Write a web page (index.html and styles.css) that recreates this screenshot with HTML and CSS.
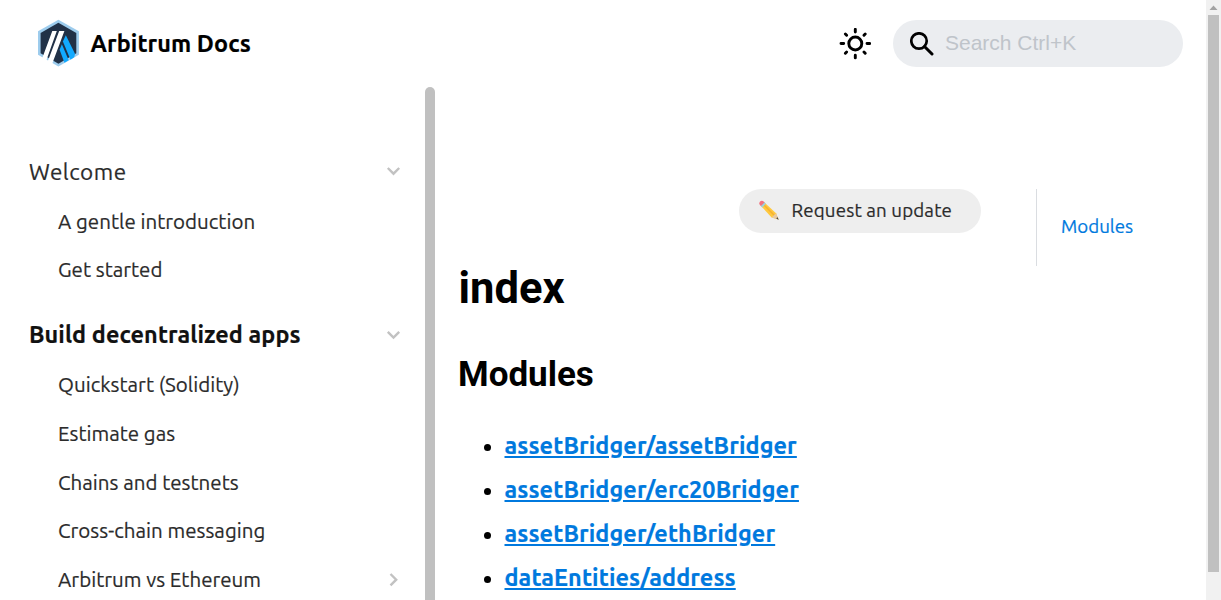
FILE: index.html
```html
<!DOCTYPE html>
<html lang="en">
<head>
<meta charset="utf-8">
<title>index | Arbitrum Docs</title>
<link rel="stylesheet" href="styles.css">
</head>
<body>
<div class="page">
  <header class="navbar">
    <a class="brand">
      <svg class="logo" viewBox="0 0 42 48" width="42" height="48">
        <path d="M21.400 0.800 41.900 12.300v23.500L21.400 47.600 1 35.800V12.300z" fill="#9dcced"/>
        <path d="M21.400 3.700 39.300 14v20.300L21.400 44.700 3.600 34.300V14z" fill="#213147"/>
        <path d="M28.800 16.200 38 34.800 37.200 38.300 33.500 40.700 25.900 22.500z" fill="#12aaff"/>
        <path d="M24.900 25.300 31.700 41.300 27.500 43.800 22.600 30.700z" fill="#12aaff"/>
        <path d="M15.300 12h4.500L9 42.200 5 39.800zM22.200 12h5.200L15 45.200 10.600 42.700z" fill="#fff"/>
      </svg>
      <span class="brand-name">Arbitrum Docs</span>
    </a>
    <div class="tools">
      <svg class="sun" viewBox="0 0 32 32" width="32" height="32" fill="none" stroke="#000" stroke-width="2.900" stroke-linecap="round">
        <circle cx="16.300" cy="15.500" r="6.500"/>
        <path d="M16.300 1.300v2.700M16.300 27.200v2.700M2 15.500h2.700M28 15.500h2.700M6.400 6l1.200 1.200M25 24l1.200 1.200M6.400 25.200l1.200-1.200M25 7.200l1.200-1.200"/>
      </svg>
      <div class="search">
        <svg viewBox="0 0 24 24" width="24" height="24" fill="none" stroke="#000">
          <circle cx="9" cy="9" r="7.700" stroke-width="2.700"/>
          <path d="M14.500 14.500 22 22" stroke-width="3" stroke-linecap="round"/>
        </svg>
        <span class="hint">Search Ctrl+K</span>
      </div>
    </div>
  </header>
  <div class="body">
    <nav class="sidebar">
      <div class="menu">
        <div class="category"><span>Welcome</span><svg class="chev" viewBox="0 0 14 14" width="14" height="14"><path d="M1.300 4 7 9.700 12.700 4"/></svg></div>
        <div class="item"><span>A gentle introduction</span></div>
        <div class="item"><span>Get started</span></div>
        <div class="category active"><span>Build decentralized apps</span><svg class="chev" viewBox="0 0 14 14" width="14" height="14"><path d="M1.300 4.800 7 10.500 12.700 4.800"/></svg></div>
        <div class="item"><span>Quickstart (Solidity)</span></div>
        <div class="item"><span>Estimate gas</span></div>
        <div class="item"><span>Chains and testnets</span></div>
        <div class="item"><span>Cross-chain messaging</span></div>
        <div class="item"><span>Arbitrum vs Ethereum</span><svg class="chev" viewBox="0 0 14 14" width="14" height="14"><path d="M4 2 9.700 7.700 4 13.400"/></svg></div>
      </div>
      <div class="side-thumb"></div>
    </nav>
    <main class="content">
      <article class="doc">
        <a class="update">
          <svg viewBox="0 0 20 20" width="20" height="20">
            <path d="M5.200 2.200 17 13.200l2.600 6.300-7-2.100L1.700 5.700z" fill="#ffc83d"/>
            <path d="M4.500 4.500 15.700 15.700" stroke="#f5b030" stroke-width="1.500"/>
            <path d="M12.600 17.400 17 13.200l2.600 6.300z" fill="#e8c9a0"/>
            <path d="m17.400 18.700.9-1.600 1.500 2.600z" fill="#444"/>
            <path d="M6.900 3.700 3.200 7.400 1.500 5.700l3.800-3.800z" fill="#9ad0e0"/>
            <path d="M5.600 2.300 1.900 6Q-.5 4 .7 2.100 2.700-.8 5.600 2.300z" fill="#f2717f"/>
          </svg>
          <span>Request an update</span>
        </a>
        <h1>index</h1>
        <h2>Modules</h2>
        <ul>
          <li><a>assetBridger/assetBridger</a></li>
          <li><a>assetBridger/erc20Bridger</a></li>
          <li><a>assetBridger/ethBridger</a></li>
          <li><a>dataEntities/address</a></li>
        </ul>
      </article>
      <aside class="toc"><a>Modules</a></aside>
    </main>
  </div>
</div>
<div class="scrollbar">
  <svg viewBox="0 0 15 15" width="15" height="15"><path d="M3.500 10h8L7.500 5.500z" fill="#a3a3a3"/></svg>
  <div class="thumb"></div>
</div>
</body>
</html>
```
FILE: styles.css
```css
* { box-sizing: border-box; }
body {
  margin: 0;
  height: 600px;
  overflow: hidden;
  display: grid;
  grid-template-columns: 1fr 15px;
  background: #fff;
  color: #000;
  font-family: Ubuntu, "Noto Sans", sans-serif;
}
svg { display: block; flex: none; }
.page { display: flex; flex-direction: column; height: 600px; overflow: hidden; }
.navbar {
  flex: none;
  height: 87px;
  padding: 0 23px 0 37px;
  display: flex;
  align-items: center;
  justify-content: space-between;
}
.brand { display: flex; align-items: center; gap: 11.500px; }
.logo { margin-top: -1px; }
.brand-name {
  font-size: 23.400px;
  font-weight: 700;
  letter-spacing: 0.080px;
  white-space: nowrap;
  padding-bottom: 2px;
  -webkit-text-stroke: 0.200px;
}
.tools { display: flex; align-items: center; gap: 22px; }
.search {
  width: 290px;
  height: 47px;
  border-radius: 24px;
  background: #ebedf0;
  padding-left: 17px;
  display: flex;
  align-items: center;
  gap: 11px;
}
.hint { font: 21px "Liberation Sans", sans-serif; color: #bfc4ca; padding-bottom: 2px; }
.body { flex: 1; min-height: 0; display: flex; }
.sidebar { width: 435px; flex: none; display: flex; overflow: hidden; }
.menu { width: 425px; flex: none; padding: 60px 25px 0 29px; }
.side-thumb { width: 10px; height: 600px; flex: none; background: #c0c0c0; border-radius: 5px; }
.category, .item {
  display: flex;
  align-items: center;
  justify-content: space-between;
  white-space: nowrap;
  color: #2b2b2b;
  -webkit-text-stroke: 0.200px;
}
.category { height: 48px; font-size: 22.500px; letter-spacing: 0.480px; margin-bottom: 2px; }
.category.active {
  margin-top: 16.500px;
  margin-bottom: 1.500px;
  padding-bottom: 1px;
  font-size: 23.400px;
  letter-spacing: 0.080px;
  font-weight: 700;
  color: #111;
}
.item { height: 48.700px; padding-left: 29px; font-size: 20.500px; letter-spacing: 0.020px; }
.item:nth-child(3) { padding-bottom: 2px; }
.chev { fill: none; stroke: #c2c2c2; stroke-width: 2.400; overflow: visible; }
.chev path { transform: translateX(0.500px); }
.content { flex: 1; display: flex; }
.doc { width: 546px; padding: 102px 0 0 23px; display: flex; flex-direction: column; }
.update {
  align-self: flex-end;
  width: 242px;
  height: 44px;
  border-radius: 22px;
  background: #eee;
  color: #2b2b2b;
  font-size: 18.720px;
  letter-spacing: 0.150px;
  padding: 0 0 2px 20px;
  display: flex;
  align-items: center;
  gap: 12.500px;
  white-space: nowrap;
  -webkit-text-stroke: 0.200px;
}
h1, h2 { font-family: Roboto, sans-serif; font-weight: 700; margin: 0; }
h1 { font-size: 43.500px; line-height: 54px; margin-top: 29px; padding-left: 0.500px; }
h2 { font-size: 35px; line-height: 44px; margin-top: 37px; }
ul { margin: 26px 0 0; padding-left: 46.500px; font-size: 23.400px; }
li { height: 44px; line-height: 44px; white-space: nowrap; }
li a {
  color: #0079de;
  font-weight: 700;
  letter-spacing: 0.110px;
  text-decoration: underline;
  -webkit-text-stroke: 0.200px;
}
.toc {
  margin: 102px 0 0 55px;
  height: 77px;
  border-left: 1px solid #dadde1;
  padding: 0 0 3px 24px;
  display: flex;
  align-items: center;
  font-size: 18.720px;
  color: #0079de;
  -webkit-text-stroke: 0.200px;
}
.scrollbar { background: #f1f1f1; display: flex; flex-direction: column; align-items: center; }
.thumb { width: 11px; height: 557px; background: #c0c0c0; }
```
